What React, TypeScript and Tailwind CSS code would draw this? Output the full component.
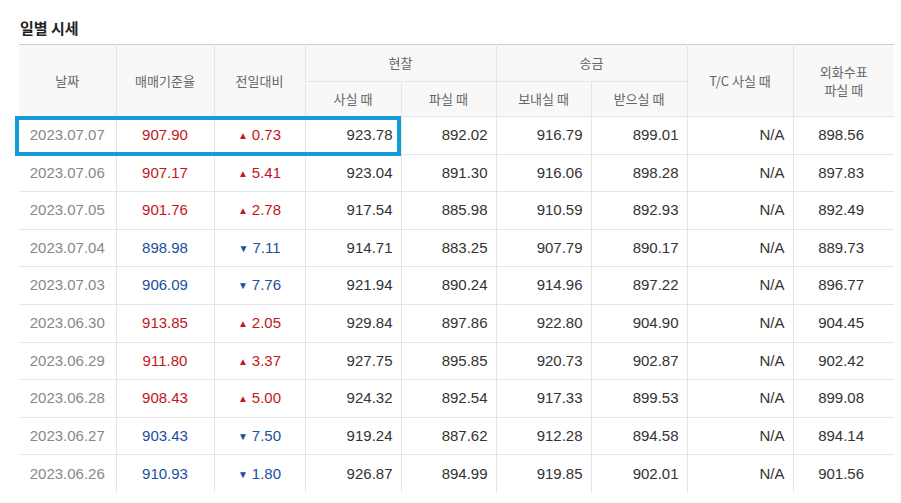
import React from "react";

const rows: [string, string, boolean, string, string[], string][] = [
  ["2023.07.07", "907.90", true, "0.73", ["923.78", "892.02", "916.79", "899.01"], "898.56"],
  ["2023.07.06", "907.17", true, "5.41", ["923.04", "891.30", "916.06", "898.28"], "897.83"],
  ["2023.07.05", "901.76", true, "2.78", ["917.54", "885.98", "910.59", "892.93"], "892.49"],
  ["2023.07.04", "898.98", false, "7.11", ["914.71", "883.25", "907.79", "890.17"], "889.73"],
  ["2023.07.03", "906.09", false, "7.76", ["921.94", "890.24", "914.96", "897.22"], "896.77"],
  ["2023.06.30", "913.85", true, "2.05", ["929.84", "897.86", "922.80", "904.90"], "904.45"],
  ["2023.06.29", "911.80", true, "3.37", ["927.75", "895.85", "920.73", "902.87"], "902.42"],
  ["2023.06.28", "908.43", true, "5.00", ["924.32", "892.54", "917.33", "899.53"], "899.08"],
  ["2023.06.27", "903.43", false, "7.50", ["919.24", "887.62", "912.28", "894.58"], "894.14"],
  ["2023.06.26", "910.93", false, "1.80", ["926.87", "894.99", "919.85", "902.01"], "901.56"],
];

const th = "border-l border-[#e5e5e5] bg-[#f8f8f8] font-normal text-[13px] text-[#666]";

export default function App() {
  return (
    <div className="w-[901px] h-[503px] bg-white pl-[19px] pr-[7px] pt-[16px]" style={{ fontFamily: '"Noto Sans CJK KR", "Liberation Sans", sans-serif' }}>
      <h2 className="text-[15px] font-bold text-[#222] leading-[24px] mb-[4px] pl-[1px]">일별 시세</h2>
      <div className="relative">
        <table className="w-[875px] border-collapse table-fixed border-t border-[#ccc]" style={{ fontFamily: '"Liberation Sans", "Noto Sans CJK KR", sans-serif' }}>
          <colgroup>
            {[97, 98, 91, 96, 95, 95, 96, 106, 101].map((w, i) => (
              <col key={i} style={{ width: w }} />
            ))}
          </colgroup>
          <thead style={{ fontFamily: '"Noto Sans CJK KR", sans-serif' }}>
            <tr className="h-[37px]">
              <th rowSpan={2} className={th + " border-l-0"}>날짜</th>
              <th rowSpan={2} className={th}>매매기준율</th>
              <th rowSpan={2} className={th}>전일대비</th>
              <th colSpan={2} className={th + " border-b"}>현찰</th>
              <th colSpan={2} className={th + " border-b"}>송금</th>
              <th rowSpan={2} className={th}>T/C 사실 때</th>
              <th rowSpan={2} className={th + " leading-[18px]"}>외화수표<br />파실 때</th>
            </tr>
            <tr className="h-[35px]">
              <th className={th}>사실 때</th>
              <th className={th}>파실 때</th>
              <th className={th}>보내실 때</th>
              <th className={th}>받으실 때</th>
            </tr>
          </thead>
          <tbody className="text-[15px] text-[#333]">
            {rows.map((r) => (
              <tr key={r[0]} className="h-[37.6px] border-t border-[#e5e5e5]">
                <td className="text-center text-[#888]">{r[0]}</td>
                <td className={"text-center border-l border-[#e5e5e5] " + (r[2] ? "text-[#c4161c]" : "text-[#1c4fa1]")}>{r[1]}</td>
                <td className={"text-center border-l border-[#e5e5e5] " + (r[2] ? "text-[#c4161c]" : "text-[#1c4fa1]")}>
                  <span className="text-[10px] mr-[4px] align-[1px]">{r[2] ? "▲" : "▼"}</span>
                  {r[3]}
                </td>
                {r[4].map((v, i) => (
                  <td key={i} className="text-right pr-[8px] border-l border-[#e5e5e5]">{v}</td>
                ))}
                <td className="text-right pr-[8px] border-l border-[#e5e5e5]">N/A</td>
                <td className="text-right pr-[30px] border-l border-[#e5e5e5]">{r[5]}</td>
              </tr>
            ))}
          </tbody>
        </table>
        <div className="absolute left-[-4px] top-[72px] w-[386px] h-[40px] border-[4px] border-[#129cd8]" />
      </div>
    </div>
  );
}
